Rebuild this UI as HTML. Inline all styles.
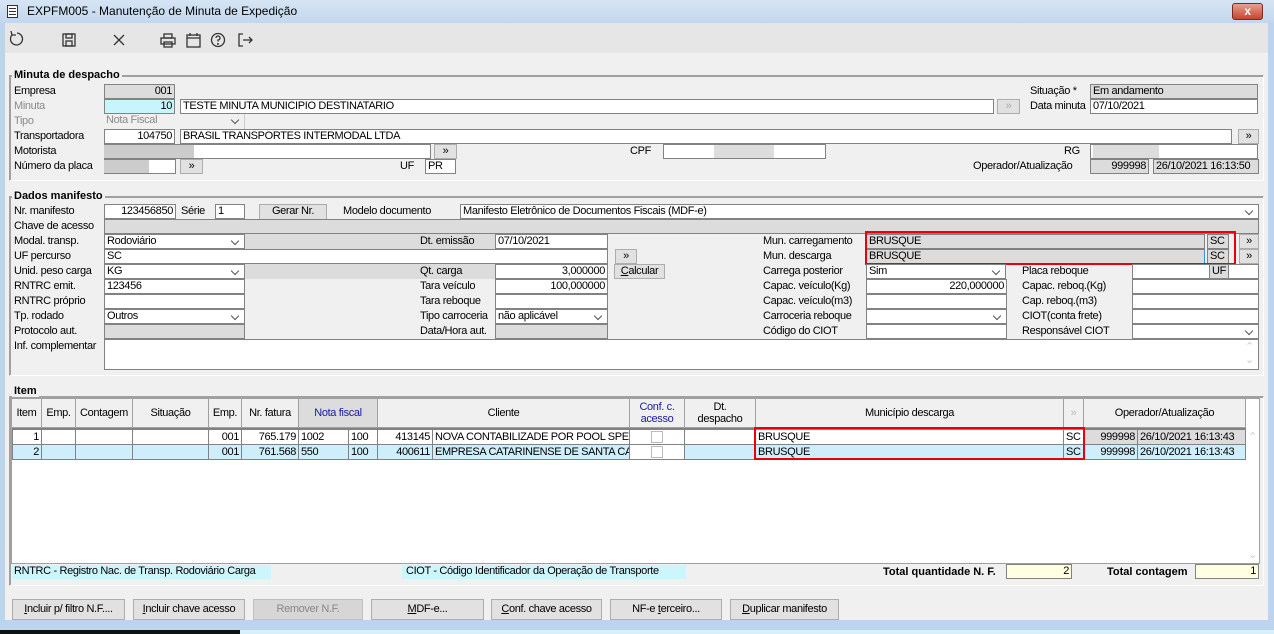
<!DOCTYPE html>
<html><head><meta charset="utf-8"><style>
*{box-sizing:border-box}
body{margin:0;width:1274px;height:634px;overflow:hidden;background:#bcd4ec;font-family:"Liberation Sans",sans-serif;font-size:11px;letter-spacing:-0.35px;position:relative}
div{position:absolute}
.t{white-space:nowrap;line-height:13px;color:#000}
.g{color:#8a8a8a}
.i{background:#fff;border:1px solid #828282;height:15px;padding:0 2px;line-height:13px;white-space:nowrap;overflow:hidden}
.gr{background:#dcdcdc}
.r{text-align:right}
.s::after{content:"";position:absolute;right:6px;top:3px;width:5px;height:5px;border-right:1px solid #555;border-bottom:1px solid #555;transform:rotate(45deg)}
.btn{background:#e1e1e1;border:1px solid #adadad;text-align:center;line-height:13px;height:15px;font-size:11px}
.fr{border:1px solid #a0a0a0;border-right-color:#fff;border-bottom-color:#fff;box-shadow:1px 1px 0 #a0a0a0 inset}
.ft{font-weight:bold;background:#f0f0f0;padding:0 2px;line-height:12px;letter-spacing:0}
.h{background:#f0f0f0;border-right:1px solid #a0a0a0;border-bottom:1px solid #a0a0a0;text-align:center;top:399px;height:29px;display:flex;align-items:center;justify-content:center;line-height:12px}
.c{height:15px;line-height:14px;border-right:1px solid #828282;border-bottom:1px solid #828282;white-space:nowrap;overflow:hidden;padding:0 2px}
.b2{height:21px;top:599px;background:#e1e1e1;border:1px solid #adadad;text-align:center;line-height:19px}
</style></head><body>
<div style="left:0;top:0;width:1274px;height:23px;background:linear-gradient(#d6e5f4,#c2d7ee)"></div>
<div style="left:7px;top:5px;width:11px;height:13px;border:1px solid #333;background:#fff"></div>
<div style="left:9px;top:8px;width:7px;height:1px;background:#333;box-shadow:0 3px #333,0 6px #333"></div>
<div class="t" style="left:27px;top:5px;font-size:12px;letter-spacing:0">EXPFM005 - Manutenção de Minuta de Expedição</div>
<div style="left:1232px;top:3px;width:31px;height:17px;background:linear-gradient(#e8a090,#c6442e);border:1px solid #7a2a1e;border-radius:3px;color:#fff;font-weight:bold;text-align:center;line-height:15px;font-size:12px">x</div>
<div style="left:5px;top:23px;width:1263px;height:597px;background:#f0f0f0"></div>
<div style="left:5px;top:23px;width:1263px;height:30px;background:#e6e6e6"></div>
<svg style="position:absolute;left:0;top:23px" width="260" height="30" fill="none" stroke="#333" stroke-width="1.3">
<path d="M12 12 A6 6 0 1 0 17 10"/><path d="M11 8 L12 12 L16 12"/>
<rect x="63" y="11" width="12" height="12"/><rect x="66" y="11" width="6" height="4"/><rect x="66" y="18" width="6" height="5"/>
<path d="M114 12 L124 22 M124 12 L114 22"/>
<rect x="161" y="15" width="14" height="6"/><rect x="164" y="11" width="8" height="4"/><rect x="164" y="19" width="8" height="5"/>
<rect x="187" y="12" width="13" height="12"/><path d="M187 15 H200 M190 10 V13 M197 10 V13"/>
<circle cx="218" cy="17" r="6.5"/><path d="M216 15 a2 2 0 1 1 2 2 v1.5"/><circle cx="218" cy="21" r="0.4"/>
<path d="M243 11 H239 V23 H243 M243 17 H252 M249 14 L252 17 L249 20"/>
</svg>

<div class="fr" style="left:9px;top:75px;width:1255px;height:106px"></div>
<div class="t ft" style="left:12px;top:69px">Minuta de despacho</div>
<div class="t" style="left:14px;top:85px">Empresa</div>
<div class="i gr r" style="left:104px;top:84px;width:71px">001</div>
<div class="t g" style="left:14px;top:100px">Minuta</div>
<div class="i r" style="left:104px;top:99px;width:71px;background:#c8f4fc">10</div>
<div class="i" style="left:180px;top:99px;width:814px">TESTE MINUTA MUNICIPIO DESTINATARIO</div>
<div class="btn" style="left:997px;top:99px;width:23px;color:#aaa">»</div>
<div class="t" style="left:1030px;top:85px">Situação *</div>
<div class="i gr" style="left:1090px;top:84px;width:168px">Em andamento</div>
<div class="t" style="left:1030px;top:100px">Data minuta</div>
<div class="i" style="left:1090px;top:99px;width:168px">07/10/2021</div>
<div class="t g" style="left:14px;top:115px">Tipo</div>
<div class="t g s" style="left:104px;top:114px;width:141px;height:15px;border-right:1px solid #ccc;padding-left:2px;line-height:13px">Nota Fiscal</div>
<div class="t" style="left:14px;top:130px">Transportadora</div>
<div class="i r" style="left:104px;top:129px;width:71px">104750</div>
<div class="i" style="left:180px;top:129px;width:1052px">BRASIL TRANSPORTES INTERMODAL LTDA</div>
<div class="btn" style="left:1238px;top:129px;width:21px">»</div>
<div class="t" style="left:14px;top:145px">Motorista</div>
<div class="i" style="left:104px;top:144px;width:327px;border-left:none"><div style="left:0;top:0;width:90px;height:13px;background:#ccc"></div></div>
<div class="btn" style="left:434px;top:144px;width:23px">»</div>
<div class="t" style="left:630px;top:145px">CPF</div>
<div class="i" style="left:663px;top:144px;width:163px"><div style="left:50px;top:0;width:60px;height:13px;background:#ddd"></div></div>
<div class="t" style="left:1064px;top:145px">RG</div>
<div class="i" style="left:1090px;top:144px;width:168px"><div style="left:2px;top:0;width:66px;height:13px;background:#ddd"></div></div>
<div class="t" style="left:14px;top:160px">Número da placa</div>
<div class="i" style="left:104px;top:159px;width:72px;border-left:none"><div style="left:0;top:0;width:45px;height:13px;background:#ccc"></div></div>
<div class="btn" style="left:180px;top:159px;width:23px">»</div>
<div class="t" style="left:400px;top:160px">UF</div>
<div class="i" style="left:425px;top:159px;width:31px">PR</div>
<div class="t" style="left:973px;top:160px">Operador/Atualização</div>
<div class="i gr r" style="left:1090px;top:159px;width:59px">999998</div>
<div class="i gr" style="left:1153px;top:159px;width:106px">26/10/2021 16:13:50</div>

<div class="fr" style="left:9px;top:196px;width:1255px;height:180px"></div>
<div class="t ft" style="left:12px;top:190px">Dados manifesto</div>
<div class="t" style="left:14px;top:205px">Nr. manifesto</div>
<div class="i r" style="left:104px;top:204px;width:72px">123456850</div>
<div class="t" style="left:181px;top:205px">Série</div>
<div class="i" style="left:215px;top:204px;width:30px">1</div>
<div class="btn" style="left:259px;top:204px;width:68px;height:16px">Gerar Nr.</div>
<div class="t" style="left:343px;top:205px">Modelo documento</div>
<div class="i s" style="left:460px;top:204px;width:799px">Manifesto Eletrônico de Documentos Fiscais (MDF-e)</div>
<div class="t" style="left:14px;top:220px">Chave de acesso</div>
<div class="i gr" style="left:104px;top:219px;width:1155px"></div>
<div class="t" style="left:14px;top:235px">Modal. transp.</div>
<div class="i gr" style="left:244px;top:234px;width:252px;border:none"></div>
<div class="i s" style="left:104px;top:234px;width:141px">Rodoviário</div>
<div class="t" style="left:420px;top:235px">Dt. emissão</div>
<div class="i" style="left:495px;top:234px;width:113px">07/10/2021</div>
<div class="t" style="left:14px;top:250px">UF percurso</div>
<div class="i" style="left:104px;top:249px;width:504px">SC</div>
<div class="btn" style="left:615px;top:249px;width:22px">»</div>
<div class="t" style="left:14px;top:265px">Unid. peso carga</div>
<div class="i gr" style="left:244px;top:264px;width:252px;border:none"></div>
<div class="i s" style="left:104px;top:264px;width:141px">KG</div>
<div class="t" style="left:420px;top:265px">Qt. carga</div>
<div class="i r" style="left:495px;top:264px;width:113px">3,000000</div>
<div class="btn" style="left:614px;top:264px;width:51px"><u>C</u>alcular</div>
<div class="t" style="left:14px;top:280px">RNTRC emit.</div>
<div class="i" style="left:104px;top:279px;width:141px">123456</div>
<div class="t" style="left:420px;top:280px">Tara veículo</div>
<div class="i r" style="left:495px;top:279px;width:113px">100,000000</div>
<div class="t" style="left:14px;top:295px">RNTRC próprio</div>
<div class="i" style="left:104px;top:294px;width:141px"></div>
<div class="t" style="left:420px;top:295px">Tara reboque</div>
<div class="i" style="left:495px;top:294px;width:113px"></div>
<div class="t" style="left:14px;top:310px">Tp. rodado</div>
<div class="i s" style="left:104px;top:309px;width:141px">Outros</div>
<div class="t" style="left:420px;top:310px">Tipo carroceria</div>
<div class="i s" style="left:495px;top:309px;width:113px">não aplicável</div>
<div class="t" style="left:14px;top:325px">Protocolo aut.</div>
<div class="i gr" style="left:104px;top:324px;width:141px"></div>
<div class="t" style="left:420px;top:325px">Data/Hora aut.</div>
<div class="i gr" style="left:495px;top:324px;width:113px"></div>
<div class="t" style="left:14px;top:340px">Inf. complementar</div>
<div class="i" style="left:104px;top:339px;width:1155px;height:31px"></div>
<div class="t" style="left:1245px;top:341px;color:#ccc">⌃<br>⌄</div>
<div class="t" style="left:763px;top:235px">Mun. carregamento</div>
<div class="i gr" style="left:866px;top:234px;width:339px">BRUSQUE</div>
<div class="i gr" style="left:1207px;top:234px;width:22px">SC</div>
<div class="btn" style="left:1239px;top:234px;width:20px">»</div>
<div class="t" style="left:763px;top:250px">Mun. descarga</div>
<div class="i gr" style="left:866px;top:249px;width:339px;border-color:#3c8fd8">BRUSQUE</div>
<div class="i gr" style="left:1207px;top:249px;width:22px">SC</div>
<div class="btn" style="left:1239px;top:249px;width:20px">»</div>
<div style="left:865px;top:231px;width:371px;height:34px;border:2px solid #e8000a"></div>
<div class="t" style="left:763px;top:265px">Carrega posterior</div>
<div class="i s" style="left:866px;top:264px;width:140px">Sim</div>
<div class="t" style="left:1022px;top:265px">Placa reboque</div>
<div class="i" style="left:1132px;top:264px;width:78px"></div>
<div class="i gr" style="left:1209px;top:264px;width:20px">UF</div>
<div class="i" style="left:1228px;top:264px;width:31px"></div>
<div class="t" style="left:763px;top:280px">Capac. veículo(Kg)</div>
<div class="i r" style="left:866px;top:279px;width:141px">220,000000</div>
<div class="t" style="left:1022px;top:280px">Capac. reboq.(Kg)</div>
<div class="i" style="left:1132px;top:279px;width:127px"></div>
<div class="t" style="left:763px;top:295px">Capac. veículo(m3)</div>
<div class="i" style="left:866px;top:294px;width:141px"></div>
<div class="t" style="left:1022px;top:295px">Cap. reboq.(m3)</div>
<div class="i" style="left:1132px;top:294px;width:127px"></div>
<div class="t" style="left:763px;top:310px">Carroceria reboque</div>
<div class="i s" style="left:866px;top:309px;width:141px"></div>
<div class="t" style="left:1022px;top:310px">CIOT(conta frete)</div>
<div class="i" style="left:1132px;top:309px;width:127px"></div>
<div class="t" style="left:763px;top:325px">Código do CIOT</div>
<div class="i" style="left:866px;top:324px;width:141px"></div>
<div class="t" style="left:1022px;top:325px">Responsável CIOT</div>
<div class="i s" style="left:1132px;top:324px;width:127px"></div>

<div class="fr" style="left:9px;top:396px;width:1255px;height:190px"></div>
<div class="t ft" style="left:12px;top:385px">Item</div>
<div style="left:11px;top:398px;width:1249px;height:166px;background:#fff;border:1px solid #a0a0a0"></div>
<div class="h" style="left:12px;width:30px">Item</div>
<div class="h" style="left:42px;width:34px">Emp.</div>
<div class="h" style="left:76px;width:57px">Contagem</div>
<div class="h" style="left:133px;width:76px">Situação</div>
<div class="h" style="left:209px;width:33px">Emp.</div>
<div class="h" style="left:242px;width:57px">Nr. fatura</div>
<div class="h" style="left:299px;width:79px;background:#dcdcdc;color:#1a1aa0">Nota fiscal</div>
<div class="h" style="left:378px;width:252px">Cliente</div>
<div class="h" style="left:630px;width:55px;color:#1a1aa0">Conf. c.<br>acesso</div>
<div class="h" style="left:685px;width:71px">Dt.<br>despacho</div>
<div class="h" style="left:756px;width:308px">Município descarga</div>
<div class="h" style="left:1064px;width:20px;color:#bbb">»</div>
<div class="h" style="left:1084px;width:162px">Operador/Atualização</div>
<div style="left:12px;top:428px;width:1234px;height:2px;background:#828282"></div>
<div style="left:12px;top:430px;width:1234px;height:30px">
 <div class="c r" style="left:0;top:0;width:30px;border-left:1px solid #828282">1</div>
 <div class="c" style="left:30px;top:0;width:34px"></div>
 <div class="c" style="left:64px;top:0;width:57px"></div>
 <div class="c" style="left:121px;top:0;width:76px"></div>
 <div class="c r" style="left:197px;top:0;width:33px">001</div>
 <div class="c r" style="left:230px;top:0;width:57px">765.179</div>
 <div class="c" style="left:287px;top:0;width:50px">1002</div>
 <div class="c" style="left:337px;top:0;width:29px">100</div>
 <div class="c r" style="left:366px;top:0;width:55px">413145</div>
 <div class="c" style="left:421px;top:0;width:197px">NOVA CONTABILIZADE POR POOL SPED</div>
 <div class="c" style="left:618px;top:0;width:55px"><div style="left:21px;top:1px;width:12px;height:12px;border:1px solid #bbb"></div></div>
 <div class="c" style="left:673px;top:0;width:71px"></div>
 <div class="c" style="left:744px;top:0;width:308px">BRUSQUE</div>
 <div class="c" style="left:1052px;top:0;width:20px">SC</div>
 <div class="c r gr" style="left:1072px;top:0;width:54px">999998</div>
 <div class="c gr" style="left:1126px;top:0;width:108px">26/10/2021 16:13:43</div>
</div>
<div style="left:12px;top:445px;width:1234px;height:15px">
 <div class="c r" style="left:0;top:0;width:30px;border-left:1px solid #828282;background:#cdeefa">2</div>
 <div class="c" style="left:30px;top:0;width:34px;background:#cdeefa"></div>
 <div class="c" style="left:64px;top:0;width:57px;background:#cdeefa"></div>
 <div class="c" style="left:121px;top:0;width:76px;background:#cdeefa"></div>
 <div class="c r" style="left:197px;top:0;width:33px;background:#cdeefa">001</div>
 <div class="c r" style="left:230px;top:0;width:57px;background:#cdeefa">761.568</div>
 <div class="c" style="left:287px;top:0;width:50px;background:#cdeefa">550</div>
 <div class="c" style="left:337px;top:0;width:29px;background:#cdeefa">100</div>
 <div class="c r" style="left:366px;top:0;width:55px;background:#cdeefa">400611</div>
 <div class="c" style="left:421px;top:0;width:197px;background:#cdeefa">EMPRESA CATARINENSE DE SANTA CAT</div>
 <div class="c" style="left:618px;top:0;width:55px;background:#fff"><div style="left:21px;top:1px;width:12px;height:12px;border:1px solid #bbb"></div></div>
 <div class="c" style="left:673px;top:0;width:71px;background:#cdeefa"></div>
 <div class="c" style="left:744px;top:0;width:308px;background:#cdeefa">BRUSQUE</div>
 <div class="c" style="left:1052px;top:0;width:20px;background:#cdeefa">SC</div>
 <div class="c r" style="left:1072px;top:0;width:54px;background:#cdeefa">999998</div>
 <div class="c" style="left:1126px;top:0;width:108px;background:#cdeefa">26/10/2021 16:13:43</div>
</div>
<div style="left:754px;top:427px;width:331px;height:33px;border:2px solid #e8000a"></div>
<div class="t" style="left:1248px;top:431px;color:#ccc">⌃</div>
<div class="t" style="left:1248px;top:549px;color:#ccc">⌄</div>
<div class="t" style="left:12px;top:565px;width:259px;height:14px;background:#cdf6fc;padding-left:2px">RNTRC - Registro Nac. de Transp. Rodoviário Carga</div>
<div class="t" style="left:402px;top:565px;width:284px;height:14px;background:#cdf6fc;padding-left:4px">CIOT - Código Identificador da Operação de Transporte</div>
<div class="t" style="left:883px;top:566px;font-weight:bold;letter-spacing:0">Total quantidade N. F.</div>
<div class="i r" style="left:1006px;top:564px;width:66px;background:#ffffe1">2</div>
<div class="t" style="left:1107px;top:566px;font-weight:bold;letter-spacing:0">Total contagem</div>
<div class="i r" style="left:1195px;top:564px;width:64px;background:#ffffe1">1</div>
<div class="b2" style="left:12px;width:113px"><u>I</u>ncluir p/ filtro N.F....</div>
<div class="b2" style="left:133px;width:112px"><u>I</u>ncluir chave acesso</div>
<div class="b2" style="left:253px;width:110px;background:#d6d6d6;color:#888;border-color:#bfbfbf">Remover N.F.</div>
<div class="b2" style="left:371px;width:113px"><u>M</u>DF-e...</div>
<div class="b2" style="left:491px;width:111px"><u>C</u>onf. chave acesso</div>
<div class="b2" style="left:610px;width:112px">NF-e <u>t</u>erceiro...</div>
<div class="b2" style="left:730px;width:109px"><u>D</u>uplicar manifesto</div>
<div style="left:0;top:630px;width:240px;height:4px;background:#111"></div>
<div style="left:240px;top:630px;width:1034px;height:4px;background:#d8eef8"></div>
</body></html>
